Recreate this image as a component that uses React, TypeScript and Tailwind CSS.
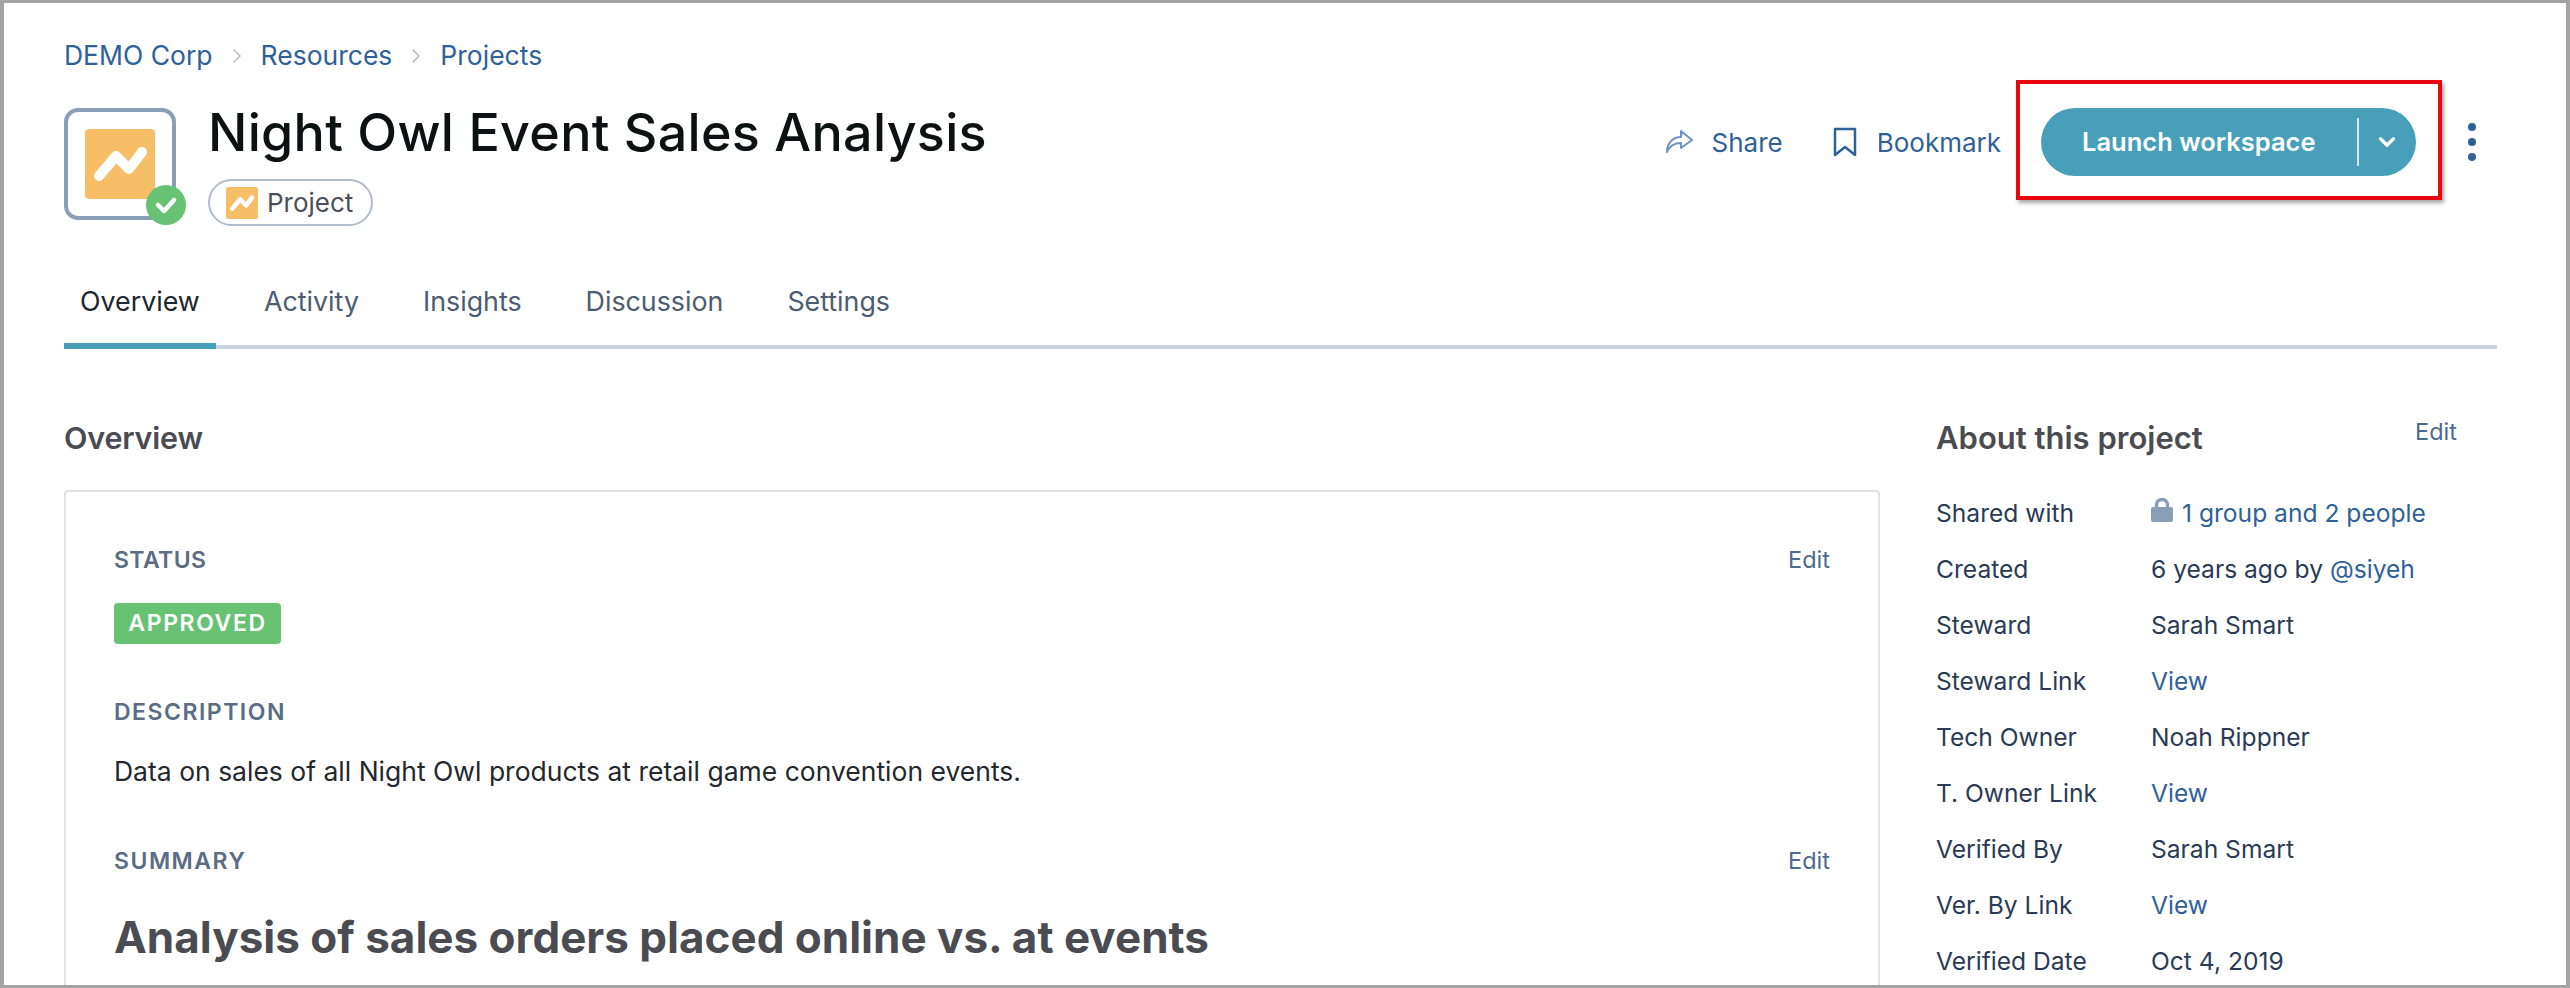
import { ChevronDown, ChevronRight } from 'lucide-react'

const tabs = ['Overview', 'Activity', 'Insights', 'Discussion', 'Settings']

const aboutRows = [
  { label: 'Shared with', value: 'group' },
  { label: 'Created', value: 'created' },
  { label: 'Steward', value: 'Sarah Smart' },
  { label: 'Steward Link', value: 'link' },
  { label: 'Tech Owner', value: 'Noah Rippner' },
  { label: 'T. Owner Link', value: 'link' },
  { label: 'Verified By', value: 'Sarah Smart' },
  { label: 'Ver. By Link', value: 'link' },
  { label: 'Verified Date', value: 'Oct 4, 2019' },
]

function ZigZag({ width }: { width: number }) {
  return (
    <svg width={width} height={width} viewBox="0 0 70 70" fill="none">
      <path
        d="M14 47 L31 27 L44 40 L57 23"
        stroke="white"
        strokeWidth="10"
        strokeLinecap="round"
        strokeLinejoin="round"
      />
    </svg>
  )
}

function RowValue({ value }: { value: string }) {
  if (value === 'group') {
    return (
      <span className="flex items-center text-[#2f6199]">
        <svg width="22" height="24" viewBox="0 0 22 24" className="mr-[9px] -mt-[6px]">
          <path d="M5.5 10 V7 a5.5 5.5 0 0 1 11 0 V10" fill="none" stroke="#8a9fb5" strokeWidth="3.5" />
          <rect x="0" y="9" width="22" height="15" rx="2" fill="#8a9fb5" />
        </svg>
        1 group and 2 people
      </span>
    )
  }
  if (value === 'created') {
    return (
      <span>
        6 years ago by <span className="text-[#2f6199]">@siyeh</span>
      </span>
    )
  }
  if (value === 'link') return <span className="text-[#2f6199]">View</span>
  return <span>{value}</span>
}

export default function App() {
  return (
    <div className="h-[988px] overflow-hidden border-x-[4px] border-y-[3px] border-[#a3a3a3] bg-white pl-[60px] pr-[69px] font-['Inter',sans-serif]">
      {/* Breadcrumb */}
      <div className="mt-[36px] flex h-[34px] items-center text-[26.5px] text-[#2f6199]">
        <span>DEMO Corp</span>
        <ChevronRight size={24} strokeWidth={1.75} className="mx-[12px] text-[#b4c0cf]" />
        <span>Resources</span>
        <ChevronRight size={24} strokeWidth={1.75} className="mx-[12px] text-[#b4c0cf]" />
        <span>Projects</span>
      </div>

      {/* Header */}
      <div className="relative mt-[35px] flex justify-between">
        <div className="flex">
          <div className="relative flex h-[112px] w-[112px] items-center justify-center rounded-[14px] border-[4px] border-[#8a9fb5]">
            <div className="h-[70px] w-[70px] rounded-[4px] bg-[#f6be67]">
              <ZigZag width={70} />
            </div>
            <div className="absolute -bottom-[9px] -right-[14px] flex h-[40px] w-[40px] items-center justify-center rounded-full bg-[#68c274]">
              <svg width="24" height="24" viewBox="0 0 24 24" fill="none">
                <path d="M4 12 L10 18 L20 7" stroke="white" strokeWidth="4.5" strokeLinecap="round" strokeLinejoin="round" />
              </svg>
            </div>
          </div>
          <div className="ml-[32px]">
            <h1 className="-mt-[5px] text-[52px] leading-[60px] font-medium tracking-[0.3px] text-[#0c1214]">
              Night Owl Event Sales Analysis
            </h1>
            <div className="mt-[16px] flex h-[47px] w-[165px] items-center rounded-full border-2 border-[#aebccb] pl-[16px]">
              <div className="h-[32px] w-[32px] rounded-[2px] bg-[#f6be67]">
                <ZigZag width={32} />
              </div>
              <span className="ml-[9px] text-[26px] text-[#4b4f58]">Project</span>
            </div>
          </div>
        </div>

        <div className="mr-[21px] flex h-[68px] items-center text-[26px] text-[#2f6199]">
          <svg width="28" height="28" viewBox="0 0 28 28" fill="none" stroke="#6c93c4" strokeWidth="2" strokeLinejoin="round">
            <path d="M16 3 L27 12 L16 20 V15 C10 15 5 17 2 24 C2 15 8 9 16 9 Z" />
          </svg>
          <span className="ml-[19px]">Share</span>
          <svg width="24" height="30" viewBox="0 0 24 30" fill="none" stroke="#2f6199" strokeWidth="2.5" strokeLinejoin="round" className="ml-[50px]">
            <path d="M2 2 H22 V28 L12 20 L2 28 Z" />
          </svg>
          <span className="ml-[20px]">Bookmark</span>

          <div className="ml-[40px] flex h-[68px] w-[375px] items-center rounded-full bg-[#479fba] text-white">
            <span className="ml-[41px] w-[275px] text-[25.5px] font-semibold">Launch workspace</span>
            <div className="h-[48px] w-[2px] bg-[#d5e6ec]" />
            <ChevronDown size={26} strokeWidth={3} className="ml-[15px]" />
          </div>

          <div className="ml-[52px] flex flex-col gap-[7px]">
            <div className="h-[8px] w-[8px] rounded-full bg-[#2f6199]" />
            <div className="h-[8px] w-[8px] rounded-full bg-[#2f6199]" />
            <div className="h-[8px] w-[8px] rounded-full bg-[#2f6199]" />
          </div>
        </div>

        {/* Highlight box */}
        <div className="absolute -top-[28px] right-[55px] h-[120px] w-[426px] border-[4px] border-[#e8070c] shadow-[2px_3px_4px_rgba(0,0,0,0.35)]" />
      </div>

      {/* Tabs */}
      <div className="mt-[43px] flex h-[80px] gap-[32px] border-b-[4px] border-[#cbd3dc] text-[26.8px]">
        {tabs.map((tab, index) => (
          <div
            key={tab}
            className={
              index === 0
                ? '-mb-[4px] flex h-[80px] w-[152px] items-start border-b-[6px] border-[#479fba] px-[16px] pt-[12px] text-[#20262d]'
                : 'flex items-start px-[16px] pt-[12px] text-[#4d5c70]'
            }
          >
            {tab}
          </div>
        ))}
      </div>

      <div className="mt-[67px] flex">
        {/* Main column */}
        <div className="w-[1816px] shrink-0">
          <h2 className="h-[44px] text-[30.5px] leading-[44px] font-semibold tracking-[-0.2px] text-[#4a4c52]">Overview</h2>
          <div className="mt-[30px] rounded-[4px] border-2 border-[#e2e2e4] px-[48px] pt-[50px] pb-[60px]">
            <div className="flex items-center justify-between">
              <span className="text-[23px] leading-[36px] font-semibold tracking-[0.4px] text-[#5b6c84]">STATUS</span>
              <span className="text-[23.5px] text-[#4d6a8f]">Edit</span>
            </div>
            <div className="mt-[25px] flex h-[41px] w-[167px] items-center justify-center rounded-[4px] bg-[#68c274] text-[23px] font-semibold tracking-[1.6px] text-white">
              APPROVED
            </div>
            <div className="mt-[50px] text-[23px] leading-[36px] font-semibold tracking-[1.5px] text-[#5b6c84]">DESCRIPTION</div>
            <p className="mt-[23px] text-[26.5px] leading-[36px] text-[#24272c]">
              Data on sales of all Night Owl products at retail game convention events.
            </p>
            <div className="mt-[54px] flex items-center justify-between">
              <span className="text-[23px] leading-[36px] font-semibold tracking-[1.5px] text-[#5b6c84]">SUMMARY</span>
              <span className="text-[23.5px] text-[#4d6a8f]">Edit</span>
            </div>
            <h3 className="mt-[28px] text-[44px] leading-[60px] font-bold text-[#4a4c52]">
              Analysis of sales orders placed online vs. at events
            </h3>
          </div>
        </div>

        {/* About column */}
        <div className="ml-[56px] w-[521px] shrink-0">
          <div className="flex h-[44px] justify-between">
            <h2 className="text-[31px] leading-[44px] font-semibold text-[#4a4c52]">About this project</h2>
            <span className="-mt-[2px] text-[23.5px] leading-[36px] text-[#4d6a8f]">Edit</span>
          </div>
          <div className="mt-[25px] text-[24.6px] leading-[56px] text-[#2b3a55]">
            {aboutRows.map((row) => (
              <div key={row.label} className="flex h-[56px]">
                <div className="w-[215px] shrink-0">{row.label}</div>
                <RowValue value={row.value} />
              </div>
            ))}
          </div>
        </div>
      </div>
    </div>
  )
}
